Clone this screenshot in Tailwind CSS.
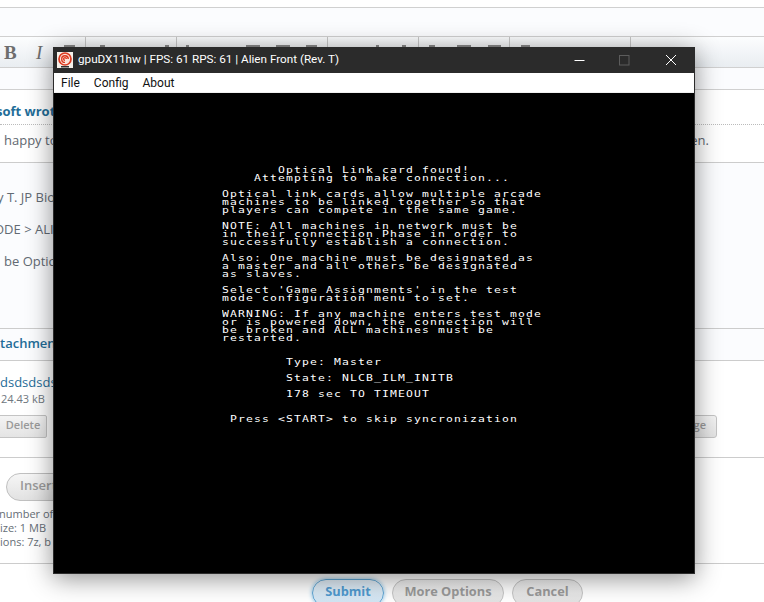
<!doctype html>
<html><head><meta charset="utf-8"><title>gpuDX11hw</title>
<script src="https://cdn.jsdelivr.net/npm/@tailwindcss/browser@4"></script></head>
<body class="relative w-[764px] h-[602px] overflow-hidden bg-white font-['Open_Sans','Noto_Sans',sans-serif] text-[12px] text-[#6f7780]">
<div class="flex flex-col w-full">
  <div class="h-[7px]"></div>
  <div class="h-[30px] border-t border-b border-[#d0d0d0] bg-[#fbfcfe]"></div>
  <div class="h-[30px] bg-gradient-to-b from-[#fcfdfe] to-[#e9edf1] flex relative">
    <span class="absolute left-[4px] top-[2px] font-['Liberation_Serif',serif] font-bold text-[19px] text-[#6d6d6d]">B</span>
    <span class="absolute left-[36px] top-[2px] font-['Liberation_Serif',serif] italic text-[19px] text-[#6d6d6d]">I</span>
    <svg class="absolute left-0 top-0" width="764" height="30" viewBox="0 0 764 30">
      <g fill="#c8c8c8"><rect x="85" width="1" height="30"/><rect x="176" width="1" height="30"/><rect x="327" width="1" height="30"/><rect x="418" width="1" height="30"/><rect x="509" width="1" height="30"/><rect x="630" width="1" height="30"/></g>
      <g fill="#8a8a8a"><rect x="64" y="8" width="11" height="2"/><rect x="100" y="8" width="5" height="2"/><rect x="165" y="8" width="4" height="2"/><rect x="186" y="8" width="3" height="2"/><rect x="246" y="8" width="14" height="2"/><rect x="276" y="8" width="14" height="2"/><rect x="306" y="8" width="11" height="2"/><rect x="376" y="8" width="3" height="2"/><rect x="402" y="8" width="4" height="2"/><rect x="429" y="8" width="6" height="2"/><rect x="457" y="8" width="14" height="2"/><rect x="488" y="8" width="13" height="2"/><rect x="521" y="8" width="9" height="2"/></g>
    </svg>
  </div>
  <div class="h-[23px] border-t border-b border-[#d0d0d0] bg-[#fbfcfe]"></div>
  <div class="h-[35px] border-b border-dotted border-[#bbbbbb] pt-[12px] font-bold text-[#1f6d98] text-[13px] leading-[18px] whitespace-nowrap"><span class="block -ml-[4px]">soft wrote</span></div>
  <div class="h-[38px] border-b border-[#cccccc] flex justify-between items-center pl-[4px] pr-[55px] pb-[6px] text-[13px] text-[#5f6770]"><span>happy to</span><span>en.</span></div>
  <div class="h-[166px] border-b border-[#cccccc] bg-[#fbfcfe] flex flex-col text-[13px] leading-[18px] text-[#626a73] pt-[25px] gap-[14px] whitespace-nowrap">
    <span class="-ml-[3px]">y T. JP Bio</span>
    <span class="-ml-[6px]">ODE &gt; ALI</span>
    <span class="ml-[4px]">be Optic</span>
  </div>
  <div class="h-[32px] border-b border-[#cccccc] bg-[#fbfcfe] flex items-center pb-[2px] text-[13px] text-[#1f6d98] font-semibold">tachment</div>
  <div class="h-[97px] border-b border-[#cccccc] flex flex-col">
    <span class="mt-[12px] text-[#1f6d98] text-[13px] leading-[18px] whitespace-nowrap">dsdsdsds.</span>
    <span class="text-[11px] leading-[16px] ml-[1px]">24.43 kB</span>
    <div class="mt-[8px] flex justify-between">
      <span class="h-[23px] w-[48px] -ml-px border border-[#c4c4c4] bg-gradient-to-b from-[#f4f4f4] to-[#e4e4e4] rounded-r-[2px] text-center leading-[18px] text-[#9a9a9a] font-semibold text-[11px]">Delete</span>
      <span class="h-[23px] w-[28px] mr-[47px] border border-[#c4c4c4] bg-gradient-to-b from-[#f4f4f4] to-[#e4e4e4] rounded-r-[3px] text-right pr-[10px] leading-[18px] text-[#9a9a9a] font-semibold text-[11px]">ge</span>
    </div>
  </div>
  <div class="h-[106px] border-b border-[#cccccc] flex flex-col text-[11px] leading-[14px] text-[#666e76] whitespace-nowrap">
    <span class="mt-[15px] ml-[6px] w-[80px] h-[28px] rounded-full border border-[#c0c0c0] bg-gradient-to-b from-[#f6f6f6] to-[#e2e2e2] pl-[13px] text-[13px] leading-[23px] font-semibold text-[#9a9a9a]">Insert</span>
    <span class="mt-[6px] -ml-px">number of a</span>
    <span>ize: 1 MB</span>
    <span>ions: 7z, b</span>
  </div>
  <div class="flex gap-[8px] pt-[15px] pl-[312px] text-[12.8px] font-bold whitespace-nowrap text-center">
    <span class="h-[28px] w-[72px] shrink-0 rounded-full border border-[#5ba4d4] bg-gradient-to-b from-[#e3eff8] to-[#cfe3f2] leading-[23px] text-[#4f9ad0] shadow-[0_0_4px_#7fbde4]">Submit</span>
    <span class="h-[28px] w-[112px] shrink-0 rounded-full border border-[#c4c4c4] bg-gradient-to-b from-[#f2f2f2] to-[#e0e0e0] leading-[23px] text-[#9a9a9a]">More Options</span>
    <span class="h-[28px] w-[71px] shrink-0 rounded-full border border-[#c4c4c4] bg-gradient-to-b from-[#f2f2f2] to-[#e0e0e0] leading-[23px] text-[#9a9a9a]">Cancel</span>
  </div>
</div>

<div class="absolute left-[53px] top-[47px] w-[642px] h-[527px] flex flex-col border border-[#2b2b2b] border-t-0 shadow-[0_4px_24px_rgba(0,0,0,0.45)] font-['Roboto','Noto_Sans',sans-serif]">
  <div class="h-[26px] bg-[#2b2b2b] flex items-center text-white text-[11.7px] shrink-0">
    <svg class="ml-[3px] shrink-0" width="16" height="16" viewBox="0 0 16 16"><rect width="16" height="16" fill="#f6f1ea"/><circle cx="8" cy="7" r="6" fill="#fbe3da" stroke="#dc3a20" stroke-width="1.7"/><path d="M8 10.4A3.3 3.3 0 1 1 11.3 7M8 8.4A1.4 1.4 0 1 1 9.4 7" fill="none" stroke="#dc3a20" stroke-width="1.4"/><rect x="4" y="14" width="8" height="1.5" fill="#333"/></svg>
    <span class="ml-[5px] whitespace-nowrap">gpuDX11hw | FPS: 61 RPS: 61 | Alien Front (Rev. T)</span>
    <svg class="ml-auto mr-[34px]" width="11" height="11" viewBox="0 0 11 11"><path d="M0.5 5.5H10.5" stroke="#fff" stroke-width="1"/></svg>
    <svg class="mr-[35px]" width="11" height="11" viewBox="0 0 11 11"><rect x="0.5" y="0.5" width="9.5" height="9.5" fill="none" stroke="#5c5c5c"/></svg>
    <svg class="mr-[17px]" width="12" height="12" viewBox="0 0 12 12"><path d="M1 1L11 11M11 1L1 11" stroke="#fff" stroke-width="1"/></svg>
  </div>
  <div class="h-[19px] bg-white flex items-center gap-[14px] px-[7px] text-[12px] text-[#111] shrink-0"><span>File</span><span>Config</span><span>About</span></div>
  <div class="h-px bg-[#f0f0f0] shrink-0"></div>
  <div class="flex-1 bg-black overflow-hidden text-white font-['DejaVu_Sans_Mono',monospace] text-[9.5px] leading-[8px] pt-[73px] pl-[168px] whitespace-nowrap">
    <div class="origin-left scale-x-[1.2] tracking-[0.947px]">
      <div class="ml-[46.67px]">Optical Link card found!</div>
      <div class="ml-[26.67px]">Attempting to make connection...</div>
      <div class="mt-[8px]">Optical link cards allow multiple arcade</div>
      <div>machines to be linked together so that</div>
      <div>players can compete in the same game.</div>
      <div class="mt-[8px]">NOTE: All machines in network must be</div>
      <div>in their connection Phase in order to</div>
      <div>successfully establish a connection.</div>
      <div class="mt-[8px]">Also: One machine must be designated as</div>
      <div>a master and all others be designated</div>
      <div>as slaves.</div>
      <div class="mt-[8px]">Select 'Game Assignments' in the test</div>
      <div>mode configuration menu to set.</div>
      <div class="mt-[8px]">WARNING: If any machine enters test mode</div>
      <div>or is powered down, the connection will</div>
      <div>be broken and ALL machines must be</div>
      <div>restarted.</div>
      <div class="mt-[16px] ml-[53.33px]">Type: Master</div>
      <div class="mt-[8px] ml-[53.33px]">State: NLCB_ILM_INITB</div>
      <div class="mt-[8px] ml-[53.33px]">178 sec TO TIMEOUT</div>
      <div class="mt-[17px] ml-[6.67px]">Press &lt;START&gt; to skip syncronization</div>
    </div>
  </div>
</div>
</body></html>
